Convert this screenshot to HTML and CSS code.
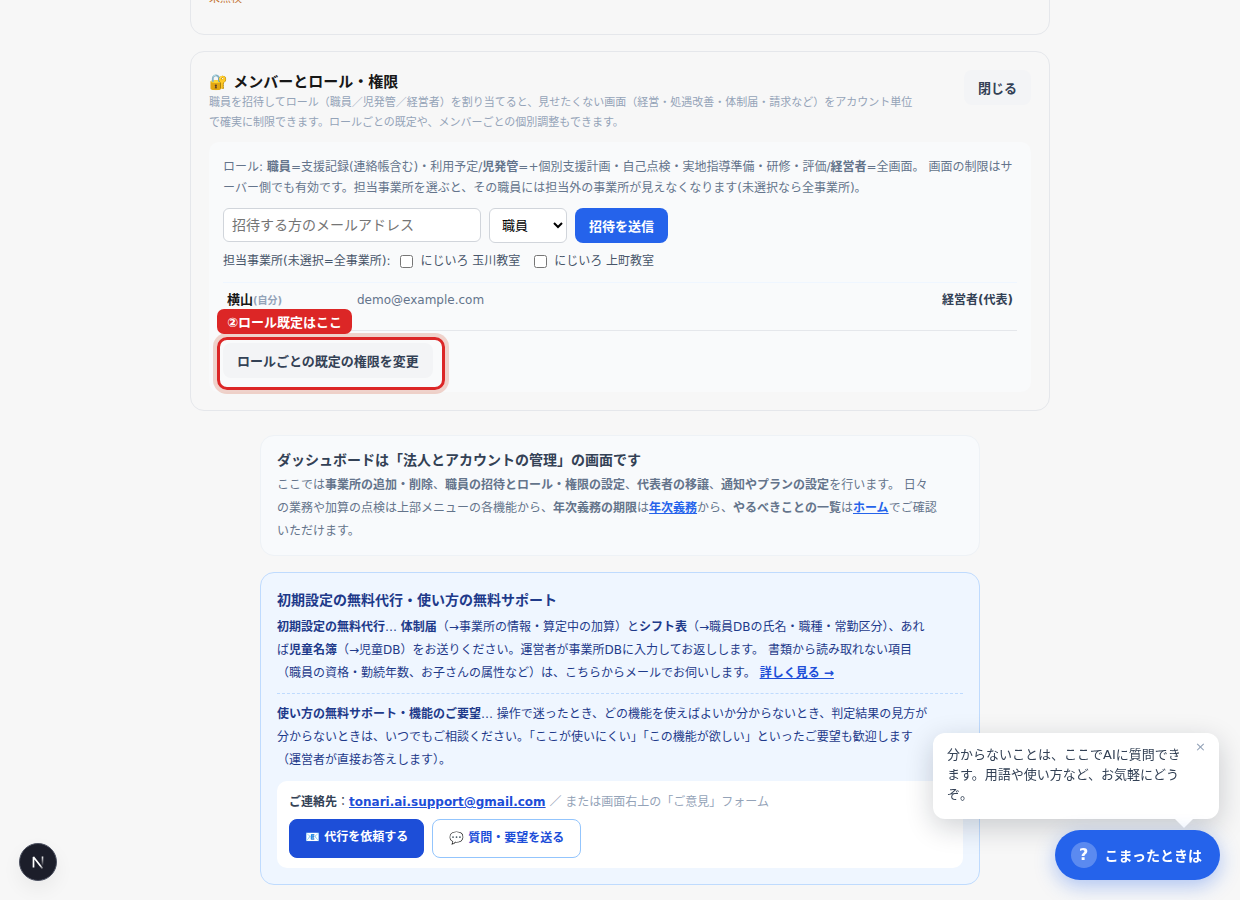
FILE: index.html
```html
<!DOCTYPE html>
<html lang="ja">
<head>
    <meta charset="UTF-8">
    <meta name="viewport" content="width=device-width, initial-scale=1.0">
    <title>ダッシュボード</title>
    <link rel="stylesheet" href="styles.css">
</head>
<body>
    <main class="page">
        <section class="card card-prev">
            <p class="warn">未点検</p>
        </section>

        <section class="card">
            <div class="card-head">
                <div>
                    <h2>🔐 メンバーとロール・権限</h2>
                    <p class="desc">職員を招待してロール（職員／児発管／経営者）を割り当てると、見せたくない画面（経営・処遇改善・体制届・請求など）をアカウント単位で確実に制限できます。ロールごとの既定や、メンバーごとの個別調整もできます。</p>
                </div>
                <button type="button" class="btn btn-gray">閉じる</button>
            </div>

            <div class="panel">
                <p class="roles">ロール: <b>職員</b>=支援記録(連絡帳含む)・利用予定/<b>児発管</b>=+個別支援計画・自己点検・実地指導準備・研修・評価/<b>経営者</b>=全画面。 画面の制限はサーバー側でも有効です。担当事業所を選ぶと、その職員には担当外の事業所が見えなくなります(未選択なら全事業所)。</p>

                <form class="invite">
                    <input type="email" class="field" placeholder="招待する方のメールアドレス" aria-label="招待する方のメールアドレス">
                    <select class="role-select" aria-label="ロール">
                        <option>職員</option>
                        <option>児発管</option>
                        <option>経営者</option>
                    </select>
                    <button type="button" class="btn btn-blue">招待を送信</button>
                </form>

                <div class="offices">
                    <span>担当事業所(未選択=全事業所):</span>
                    <label><input type="checkbox"> にじいろ 玉川教室</label>
                    <label><input type="checkbox"> にじいろ 上町教室</label>
                </div>

                <table class="members">
                    <tr>
                        <td class="name">横山<small>(自分)</small></td>
                        <td class="mail">demo@example.com</td>
                        <td class="role">経営者(代表)</td>
                    </tr>
                </table>

                <div class="defaults">
                    <button type="button" class="btn btn-gray">ロールごとの既定の権限を変更</button>
                    <div class="marker"></div>
                    <div class="marker-label">②ロール既定はここ</div>
                </div>
            </div>
        </section>

        <div class="narrow">
            <section class="note">
                <h3>ダッシュボードは「法人とアカウントの管理」の画面です</h3>
                <p>ここでは<b>事業所の追加・削除</b>、<b>職員の招待とロール・権限の設定</b>、<b>代表者の移譲</b>、<b>通知やプランの設定</b>を行います。 日々の業務や加算の点検は上部メニューの各機能から、<b>年次義務の期限</b>は<a href="#">年次義務</a>から、<b>やるべきことの一覧</b>は<a href="#">ホーム</a>でご確認いただけます。</p>
            </section>

            <section class="support">
                <h3>初期設定の無料代行・使い方の無料サポート</h3>
                <p><b>初期設定の無料代行</b>… <b>体制届</b>（→事業所の情報・算定中の加算）と<b>シフト表</b>（→職員DBの氏名・職種・常勤区分）、あれば<b>児童名簿</b>（→児童DB）をお送りください。運営者が事業所DBに入力してお返しします。 書類から読み取れない項目（職員の資格・勤続年数、お子さんの属性など）は、こちらからメールでお伺いします。 <a href="#">詳しく見る →</a></p>
                <hr>
                <p><b>使い方の無料サポート・機能のご要望</b>… 操作で迷ったとき、どの機能を使えばよいか分からないとき、判定結果の見方が分からないときは、いつでもご相談ください。「ここが使いにくい」「この機能が欲しい」といったご要望も歓迎します（運営者が直接お答えします）。</p>

                <div class="contact">
                    <div class="contact-line"><b>ご連絡先</b>：<a href="mailto:tonari.ai.support@gmail.com">tonari.ai.support@gmail.com</a> <span>／ または画面右上の「ご意見」フォーム</span></div>
                    <div class="contact-btns">
                        <a href="#" class="link-btn link-btn-fill">📧 代行を依頼する</a>
                        <a href="#" class="link-btn">💬 質問・要望を送る</a>
                    </div>
                </div>
            </section>
        </div>
    </main>

    <button type="button" class="dev-badge" aria-label="Next.js">
        <svg width="16" height="16" viewBox="0 0 16 16" fill="none">
            <defs>
                <linearGradient id="fadeDiag" x1="8" y1="8" x2="14" y2="16" gradientUnits="userSpaceOnUse">
                    <stop offset="0.4" stop-color="#fff"/>
                    <stop offset="1" stop-color="#fff" stop-opacity="0"/>
                </linearGradient>
                <linearGradient id="fadeStem" x1="12" y1="2" x2="12" y2="12" gradientUnits="userSpaceOnUse">
                    <stop stop-color="#fff"/>
                    <stop offset="1" stop-color="#fff" stop-opacity="0"/>
                </linearGradient>
            </defs>
            <path d="M3.5 13.5V3L12.5 14.5" stroke="url(#fadeDiag)" stroke-width="1.7" stroke-linejoin="bevel"/>
            <path d="M12.5 2.5V12" stroke="url(#fadeStem)" stroke-width="1.6"/>
        </svg>
    </button>

    <div class="bubble">
        <p>分からないことは、ここでAIに質問できます。用語や使い方など、お気軽にどうぞ。</p>
        <button type="button" class="bubble-close" aria-label="閉じる">×</button>
    </div>

    <button type="button" class="help"><span class="help-icon">?</span>こまったときは</button>
</body>
</html>
```

FILE: styles.css
```css
* {
    box-sizing: border-box;
}
body {
    margin: 0;
    background: #f7f7f7;
    color: #171717;
    font-family: 'DejaVu Sans', 'Noto Sans CJK JP', sans-serif;
    font-size: 12px;
}
h2, h3, p {
    margin: 0;
}
button, input, select {
    font-family: inherit;
}
.page {
    max-width: 860px;
    margin: 0 auto;
    padding-bottom: 24px;
    display: flow-root;
}
.narrow {
    max-width: 720px;
    margin: 24px auto 0;
}

/* cards */
.card {
    border: 1px solid #e5e7eb;
    border-radius: 14px;
    padding: 18px;
    margin-bottom: 16px;
}
.card-prev {
    margin-top: -30px;
}
.warn {
    color: #c2702d;
    font-size: 11px;
    line-height: 20px;
    margin-bottom: 7px;
}
.card-head {
    display: flex;
    justify-content: space-between;
    align-items: flex-start;
    gap: 12px;
    margin-bottom: 9px;
}
.card-head h2 {
    padding-top: 1px;
    font-size: 15px;
    line-height: 22px;
}
.desc {
    max-width: 64em;
    color: #94a3b8;
    font-size: 11px;
    line-height: 20px;
}
.btn {
    flex: none;
    height: 35px;
    border: none;
    border-radius: 8px;
    padding: 0 14px;
    font-size: 13px;
    font-weight: 700;
    cursor: pointer;
}
.btn-gray {
    background: #f3f4f6;
    color: #334155;
}
.btn-blue {
    background: #2563eb;
    color: #fff;
}

/* member panel */
.panel {
    background: #f9fafb;
    border-radius: 10px;
    padding: 15px 14px 14px;
}
.roles {
    color: #64748b;
    line-height: 21px;
    margin-bottom: 9px;
}
.invite {
    display: flex;
    align-items: flex-start;
    gap: 8px;
    margin-bottom: 8px;
}
.field {
    width: 258px;
    height: 34px;
    border: 1px solid #d1d5db;
    border-radius: 6px;
    padding: 0 8px;
    background: #fff;
    font-size: 14px;
}
.role-select {
    width: 78px;
    height: 35px;
    border: 1px solid #d1d5db;
    border-radius: 6px;
    padding: 0 0 0 8px;
    background: #fff;
    color: #000;
    font-size: 13px;
}
.offices {
    display: flex;
    align-items: center;
    color: #475569;
    line-height: 20px;
    margin-bottom: 11px;
}
.offices label {
    display: flex;
    align-items: center;
    gap: 7px;
    margin-left: 10px;
}
.offices label + label {
    margin-left: 14px;
}
.offices input {
    margin: 0;
}
.members {
    width: 100%;
    border-collapse: separate;
    border-spacing: 0;
    border-top: 1px solid #eff6ff;
    border-bottom: 1px solid #e5e7eb;
}
.members td {
    height: 47px;
    padding: 8px 4px;
    line-height: 18px;
    vertical-align: top;
}
.members .name {
    width: 130px;
    font-size: 13px;
    font-weight: 700;
}
.members small {
    color: #94a3b8;
    font-size: 10px;
}
.members .mail {
    color: #64748b;
}
.members .role {
    color: #334155;
    font-weight: 700;
    text-align: right;
}
.defaults {
    position: relative;
    width: fit-content;
    margin-top: 12px;
}
.defaults .btn {
    display: block;
}
.marker {
    position: absolute;
    inset: -6px -12px -12px -6px;
    border: 3px solid #dc2626;
    border-radius: 10px;
    box-shadow: 0 0 0 4px rgba(210, 85, 50, 0.24);
    pointer-events: none;
}
.marker-label {
    position: absolute;
    left: -6px;
    top: -34px;
    padding: 2px 10px 0;
    border-radius: 7px;
    background: #dc2626;
    color: #fff;
    font-size: 13px;
    font-weight: 700;
    line-height: 23px;
    white-space: nowrap;
}

/* info boxes */
.note {
    background: #f8fafc;
    border: 1px solid #eef2f6;
    border-radius: 14px;
    padding: 13px 16px 12px;
    margin-bottom: 16px;
    color: #64748b;
}
.note h3 {
    color: #334155;
    font-size: 14px;
    line-height: 22px;
    margin-bottom: 3px;
}
.note p {
    max-width: 660px;
    line-height: 23px;
}
.note a {
    color: #2563eb;
    font-weight: 700;
}
.support {
    background: #eff6ff;
    border: 1px solid #bfdbfe;
    border-radius: 14px;
    padding: 16px;
    color: #1e3a8a;
}
.support h3 {
    font-size: 14px;
    line-height: 22px;
    margin-bottom: 5px;
}
.support p {
    max-width: 654px;
    line-height: 23px;
}
.support a {
    color: #1d4ed8;
    font-weight: 700;
}
.support hr {
    margin: 8px 0 9px;
    border: none;
    border-top: 1px dashed #bfdbfe;
}
.contact {
    background: #fff;
    border-radius: 10px;
    padding: 11px 12px 10px;
    margin-top: 9px;
    color: #334155;
}
.contact-line {
    line-height: 20px;
    margin-bottom: 7px;
}
.contact-line span {
    color: #94a3b8;
}
.contact-btns {
    display: flex;
    gap: 8px;
}
.support .link-btn {
    border: 1px solid #93c5fd;
    border-radius: 8px;
    padding: 8px 16px;
    line-height: 21px;
    text-decoration: none;
}
.support .link-btn-fill {
    padding: 7px 15px 9px;
    border-color: #1d4ed8;
    background: #1d4ed8;
    color: #fff;
}

/* floating widgets */
.dev-badge {
    position: fixed;
    left: 19px;
    bottom: 19px;
    width: 38px;
    height: 38px;
    display: flex;
    align-items: center;
    justify-content: center;
    padding: 0;
    border: 1px solid #4b5060;
    border-radius: 50%;
    background: #1c1e2a;
    box-shadow: 0 8px 20px rgba(0, 0, 0, 0.06);
}
.bubble {
    position: fixed;
    right: 21px;
    bottom: 81px;
    width: 286px;
    padding: 12px 36px 14px 14px;
    border-radius: 12px;
    background: #fff;
    color: #334155;
    font-size: 13px;
    line-height: 20px;
    box-shadow: 0 8px 28px rgba(15, 23, 42, 0.2);
}
.bubble::after {
    content: '';
    position: absolute;
    right: 26px;
    bottom: -9px;
    border: 9px solid transparent;
    border-top-color: #fff;
    border-bottom: none;
}
.bubble-close {
    position: absolute;
    top: 5px;
    right: 9px;
    padding: 0 4px;
    border: none;
    background: none;
    color: #94a3b8;
    font-size: 13px;
    line-height: 18px;
}
.help {
    position: fixed;
    right: 20px;
    bottom: 20px;
    height: 50px;
    display: flex;
    align-items: center;
    gap: 8px;
    padding: 0 18px 0 16px;
    border: none;
    border-radius: 25px;
    background: #2563eb;
    color: #fff;
    font-size: 14px;
    font-weight: 700;
    box-shadow: 0 6px 20px rgba(37, 99, 235, 0.35);
}
.help-icon {
    width: 26px;
    height: 26px;
    border-radius: 50%;
    background: rgba(255, 255, 255, 0.25);
    font-size: 16px;
    line-height: 26px;
}
```
